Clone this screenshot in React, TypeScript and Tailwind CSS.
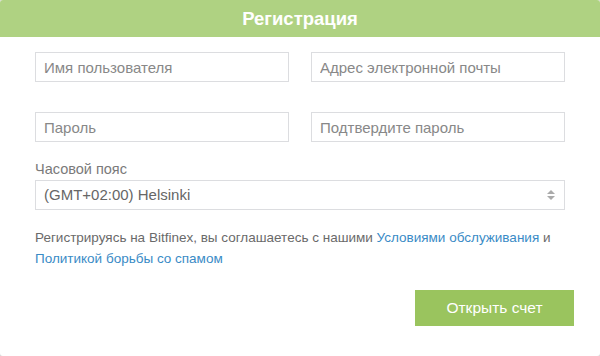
import React from "react";

const Field: React.FC<{ placeholder: string }> = ({ placeholder }) => (
  <input
    type="text"
    placeholder={placeholder}
    className="h-[30px] w-full border border-[#dcdde0] bg-white px-2 text-[15px] text-[#555] outline-none placeholder:text-[#888]"
  />
);

export default function App() {
  return (
    <div className="h-[356px] w-[600px] bg-[#d9d9d9] font-['Liberation_Sans',Arial,sans-serif]">
      <div className="flex h-full flex-col overflow-hidden rounded-[3px] bg-white">
        <div className="flex h-[37px] items-center justify-center bg-[#afd282]">
          <h1 className="text-[18.5px] font-bold text-white">Регистрация</h1>
        </div>

        <div className="flex flex-col px-[35px] pt-[15px]">
          <div className="grid grid-cols-2 gap-x-[22px] gap-y-[30px]">
            <Field placeholder="Имя пользователя" />
            <Field placeholder="Адрес электронной почты" />
            <Field placeholder="Пароль" />
            <Field placeholder="Подтвердите пароль" />
          </div>

          <label className="mt-[19px] text-[14.5px] leading-[17px] text-[#7a7a7a]">
            Часовой пояс
          </label>
          <div className="relative mt-[2px] flex h-[30px] items-center border border-[#dcdde0] px-2 text-[15px] text-[#666]">
            <span>(GMT+02:00) Helsinki</span>
            <span className="absolute right-[9px] top-1/2 flex -translate-y-1/2 flex-col items-center gap-[2px]">
              <span className="h-0 w-0 border-x-[4px] border-b-[4px] border-x-transparent border-b-[#aaa]" />
              <span className="h-0 w-0 border-x-[4px] border-t-[4px] border-x-transparent border-t-[#aaa]" />
            </span>
          </div>

          <p className="mt-[17px] text-[13.5px] leading-[21px] text-[#6a6a6a]">
            Регистрируясь на Bitfinex, вы соглашаетесь с нашими{" "}
            <a className="text-[#3a8bc6]">Условиями обслуживания</a> и{" "}
            <a className="text-[#3a8bc6]">Политикой борьбы со спамом</a>
          </p>
        </div>

        <div className="mt-[21px] flex justify-end pr-[26px]">
          <button className="h-[36px] w-[159px] bg-[#9ac45e] text-[15.5px] text-white">
            Открыть счет
          </button>
        </div>
      </div>
    </div>
  );
}
